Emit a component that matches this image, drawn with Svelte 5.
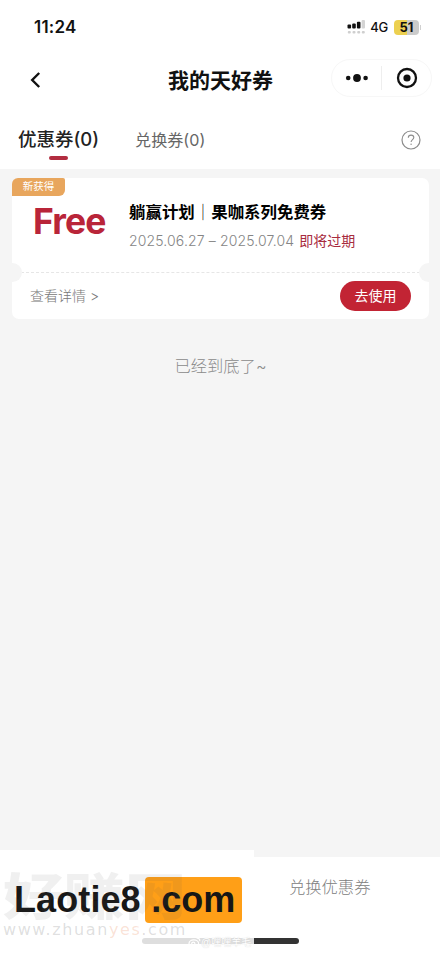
<script lang="ts">
  type Coupon = {
    id: number;
    tag: string;
    value: string;
    plan: string;
    title: string;
    from: string;
    to: string;
    notice: string;
  };

  const tabs = [
    { key: "discount", label: "优惠券", count: 0 },
    { key: "exchange", label: "兑换券", count: 0 },
  ];

  const coupons: Coupon[] = [
    {
      id: 1,
      tag: "新获得",
      value: "Free",
      plan: "躺赢计划",
      title: "果咖系列免费券",
      from: "2025.06.27",
      to: "2025.07.04",
      notice: "即将过期",
    },
  ];

  let active = $state("discount");
</script>

<div class="screen">
  <header>
    <div class="status">
      <span class="time">11:24</span>
      <div class="indicators">
        <svg class="signal" width="19" height="15" viewBox="0 0 19 15">
          <g fill="#111">
            <rect x="0.5" y="4.5" width="3.6" height="4" rx="1" />
            <rect x="5.2" y="3.5" width="3.6" height="5" rx="1" />
            <rect x="9.9" y="1.8" width="3.6" height="6.7" rx="1" />
          </g>
          <rect x="14.6" y="0" width="3.4" height="8.5" rx="1" fill="#d4d4d4" />
          <g fill="#cfcfcf">
            <rect x="0.8" y="11" width="3" height="2.6" rx="1" />
            <rect x="5.5" y="11" width="3" height="2.6" rx="1" />
            <rect x="10.2" y="11" width="3" height="2.6" rx="1" />
            <rect x="14.8" y="11" width="3" height="2.6" rx="1" />
          </g>
        </svg>
        <span class="network">4G</span>
        <span class="battery">51</span>
        <i class="battery-cap"></i>
      </div>
    </div>

    <div class="navbar">
      <svg class="back" width="11" height="16" viewBox="0 0 11 16">
        <path d="M9.2 1 2.2 8l7 7" fill="none" stroke="#111" stroke-width="2.4" />
      </svg>
      <h1>我的天好券</h1>
      <div class="capsule">
        <svg width="24" height="10" viewBox="0 0 24 10" fill="#111">
          <circle cx="3.2" cy="5" r="2.3" />
          <circle cx="12" cy="5" r="3.9" />
          <circle cx="20.6" cy="5" r="2.3" />
        </svg>
        <i></i>
        <svg width="22" height="22" viewBox="0 0 22 22">
          <circle cx="11" cy="11" r="9" fill="none" stroke="#111" stroke-width="2.3" />
          <circle cx="11" cy="11" r="3.6" fill="#111" />
        </svg>
      </div>
    </div>

    <nav>
      {#each tabs as tab (tab.key)}
        <button
          type="button"
          class="tab"
          class:active={active === tab.key}
          onclick={() => (active = tab.key)}
        >
          {tab.label}({tab.count})
        </button>
      {/each}
      <svg class="help" width="20" height="20" viewBox="0 0 20 20" fill="none" stroke="#8c8c8c">
        <circle cx="10" cy="10" r="9" stroke-width="1.2" />
        <path d="M7.3 7.8c0-3.7 5.5-3.5 5.5-.2 0 2-2.7 2.1-2.7 4.5" stroke-width="1.1" />
        <circle cx="10.1" cy="14.2" r="0.7" fill="#8c8c8c" stroke="none" />
      </svg>
    </nav>
  </header>

  <main>
    {#each coupons as coupon (coupon.id)}
      <article class="coupon">
        <span class="tag">{coupon.tag}</span>
        <div class="info">
          <strong class="value">{coupon.value}</strong>
          <div class="detail">
            <h2>{coupon.plan}<span class="bar">｜</span>{coupon.title}</h2>
            <p>
              <span class="dates">{coupon.from} – {coupon.to}</span>
              <span class="notice">{coupon.notice}</span>
            </p>
          </div>
        </div>
        <div class="tear"></div>
        <div class="actions">
          <span class="more">查看详情 &gt;</span>
          <button type="button" class="use">去使用</button>
        </div>
      </article>
    {/each}
    <p class="end">已经到底了~</p>
  </main>

  <footer>
    <span class="redeem">兑换优惠券</span>
    <i class="home-bar"></i>
    <div class="brand">
      <span class="ghost-bar"></span>
      <span class="brand-name">Laotie8</span>
      <span class="brand-tld">.com</span>
      <div class="mark">
        <span class="mark-name">好赚网</span>
        <span class="mark-url">www.zhuan<em>yes</em>.com</span>
      </div>
      <span class="credit">
        <svg width="13" height="11" viewBox="0 0 13 11" fill="none" stroke="#fff" stroke-width="1.2">
          <ellipse cx="5.8" cy="6.5" rx="4.8" ry="3.6" />
          <circle cx="5.3" cy="6.8" r="1.6" />
          <path d="M8.5 1.2c2.2-.4 3.6 1 3.2 3" />
        </svg>
        @嘿嘿羊毛
      </span>
    </div>
  </footer>
</div>

<style>
  :global(body) {
    margin: 0;
    background: #fff;
  }

  .screen {
    width: 440px;
    height: 953px;
    display: flex;
    flex-direction: column;
    overflow: hidden;
    background: #f5f5f5;
    font-family: Inter, "Noto Sans CJK SC", sans-serif;
    color: #111;
  }

  h1,
  h2,
  p {
    margin: 0;
  }

  button {
    padding: 0;
    border: 0;
    background: none;
    font-family: inherit;
    cursor: pointer;
  }

  header {
    height: 169px;
    background: #fff;
  }

  .status {
    height: 54px;
    box-sizing: border-box;
    padding: 0 19px 0 34px;
    display: flex;
    align-items: center;
    justify-content: space-between;
  }

  .time {
    font-size: 17px;
    font-weight: 600;
    letter-spacing: 0.2px;
  }

  .indicators {
    display: flex;
    align-items: center;
  }

  .network {
    margin: 0 6px 0 4px;
    font-size: 13px;
    font-weight: 500;
    letter-spacing: -0.3px;
  }

  .battery {
    width: 25px;
    height: 15px;
    border-radius: 4px;
    background: linear-gradient(90deg, #ecd050 52%, #cbcbcb 52%);
    font-size: 13px;
    font-weight: 700;
    line-height: 15px;
    text-align: center;
  }

  .battery-cap {
    width: 1px;
    height: 5px;
    margin-left: 1px;
    background: #d0d0d0;
  }

  .navbar {
    height: 50px;
    padding: 0 8px 0 30px;
    display: grid;
    grid-template-columns: 80px 1fr 101px;
    align-items: center;
  }

  .back {
    margin-top: 2px;
  }

  h1 {
    margin-top: 4px;
    font-size: 21px;
    font-weight: 700;
    line-height: 30px;
    text-align: center;
  }

  .capsule {
    height: 38px;
    margin-top: -3px;
    box-sizing: border-box;
    border: 1px solid #f7f7f7;
    border-radius: 20px;
    display: grid;
    grid-template-columns: 49px 1px 49px;
    align-items: center;
    justify-items: center;
  }

  .capsule i {
    width: 1px;
    height: 24px;
    background: #eee;
  }

  nav {
    height: 65px;
    padding: 0 19px 0 18px;
    display: flex;
    align-items: flex-start;
  }

  .tab {
    height: 57px;
    margin-right: 36px;
    display: flex;
    flex-direction: column;
    align-items: center;
    font-size: 16.1px;
    line-height: 72px;
    color: #666;
  }

  .tab.active {
    font-size: 18.5px;
    font-weight: 500;
    line-height: 70px;
    color: #222;
  }

  .tab.active::after {
    content: "";
    width: 19px;
    height: 4px;
    margin-top: -18px;
    border-radius: 2px;
    background: #b22d40;
  }

  .help {
    margin: 26px 0 0 auto;
  }

  main {
    flex: 1;
    padding: 9px 11px 0 12px;
  }

  .coupon {
    position: relative;
    height: 141px;
    border-radius: 7px;
    background: #fff;
  }

  .tag {
    position: absolute;
    top: 0;
    left: 0;
    width: 53px;
    height: 18px;
    border-radius: 6px 2px 6px 0;
    background: #e8a65d;
    color: #fff;
    font-size: 10.5px;
    line-height: 17px;
    text-align: center;
  }

  .info {
    height: 94px;
    display: grid;
    grid-template-columns: 117px 1fr;
  }

  .value {
    padding: 21px 0 0 21px;
    font-size: 35.5px;
    font-weight: 700;
    line-height: 46px;
    letter-spacing: -0.9px;
    color: #b92539;
  }

  .detail {
    padding-top: 22px;
    white-space: nowrap;
  }

  h2 {
    font-size: 16.45px;
    font-weight: 700;
    line-height: 24px;
    color: #000;
  }

  .bar {
    font-weight: 300;
  }

  .detail p {
    margin-top: 6px;
    font-size: 14px;
    line-height: 22px;
  }

  .dates {
    color: #858585;
    font-weight: 300;
    letter-spacing: 0.14px;
  }

  .notice {
    margin-left: 1px;
    color: #a82c3e;
  }

  .tear {
    margin: 0 9px;
    border-top: 1px dashed #e6e6e6;
  }

  .tear::before,
  .tear::after {
    content: "";
    position: absolute;
    top: 85px;
    left: -9px;
    width: 19px;
    height: 19px;
    border-radius: 50%;
    background: #f5f5f5;
  }

  .tear::after {
    right: -9px;
    left: auto;
  }

  .actions {
    height: 46px;
    padding: 0 18px;
    display: flex;
    align-items: center;
    justify-content: space-between;
  }

  .more {
    margin-top: -2px;
    font-size: 14px;
    font-weight: 300;
    color: #777;
  }

  .use {
    width: 71px;
    height: 30px;
    border-radius: 15px;
    background: #c22434;
    color: #fff;
    font-size: 14px;
    line-height: 30px;
  }

  .end {
    margin-top: 35px;
    font-size: 16.3px;
    font-weight: 300;
    line-height: 24px;
    text-align: center;
    color: #8a8a8a;
  }

  footer {
    position: relative;
    height: 96px;
    background: #fff;
  }

  .redeem {
    display: block;
    padding: 18px 0 0 289px;
    font-size: 16.3px;
    font-weight: 300;
    line-height: 24px;
    color: #808080;
  }

  .home-bar {
    position: absolute;
    top: 81px;
    left: 142px;
    width: 157px;
    height: 6px;
    border-radius: 3px;
    background: #333;
  }

  /* Banner lies over the left half of the bottom bar */
  .brand {
    position: absolute;
    top: -7px;
    left: 0;
    width: 254px;
    height: 103px;
    box-sizing: border-box;
    padding: 27px 0 0 14px;
    display: flex;
    align-items: flex-start;
    background: #fff;
    overflow: hidden;
    font-family: "Liberation Sans", Arial, "Noto Sans CJK SC", sans-serif;
  }

  .brand-name,
  .brand-tld {
    position: relative;
    font-size: 36px;
    font-weight: 700;
    line-height: 46px;
    color: #161616;
  }

  .brand-name {
    letter-spacing: 0.1px;
  }

  .brand-tld {
    width: 97px;
    margin-left: 4px;
    border-radius: 4px;
    background: #ff9f17;
    text-align: center;
  }

  .ghost-bar {
    position: absolute;
    top: 88px;
    left: 142px;
    width: 120px;
    height: 6px;
    border-radius: 3px;
    background: #dedede;
  }

  .mark {
    position: absolute;
    top: 24px;
    left: 3px;
    display: flex;
    flex-direction: column;
    color: rgba(90, 90, 90, 0.09);
    white-space: nowrap;
  }

  .mark-name {
    font-size: 61px;
    font-weight: 900;
    line-height: 48px;
    transform: scaleY(0.82);
  }

  .mark-url {
    font-family: "DejaVu Sans", sans-serif;
    font-size: 16px;
    line-height: 16px;
    letter-spacing: 1.6px;
    color: rgba(90, 90, 90, 0.2);
  }

  .mark-url em {
    font-style: normal;
    color: rgba(230, 110, 50, 0.2);
  }

  .credit {
    position: absolute;
    top: 86px;
    left: 188px;
    display: flex;
    align-items: center;
    font-size: 10px;
    line-height: 13px;
    color: #fff;
    text-shadow: 0 0 1px #ccc;
    white-space: nowrap;
  }
</style>
